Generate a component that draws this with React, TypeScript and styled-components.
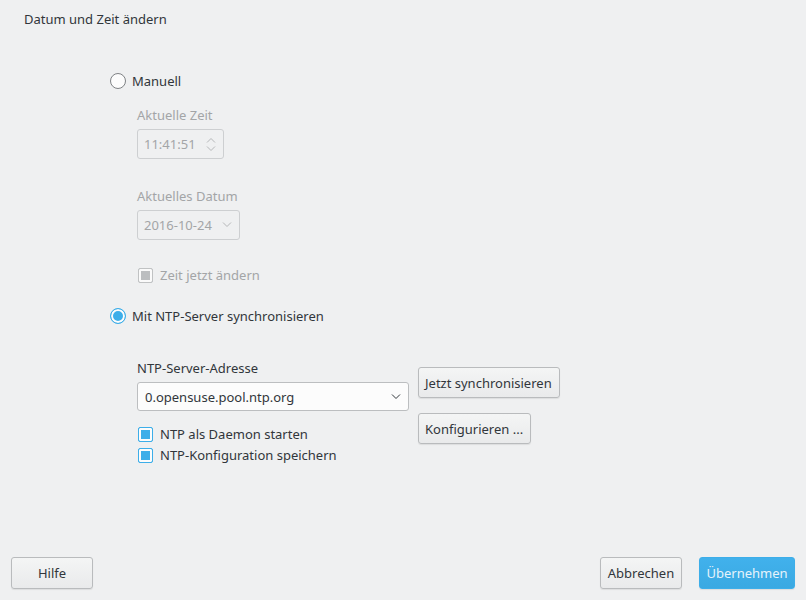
import styled, { createGlobalStyle } from "styled-components";

const GlobalStyle = createGlobalStyle`
  html, body {
    margin: 0;
    padding: 0;
    background: #eff0f1;
  }
  body {
    font-family: "Noto Sans", "Open Sans", sans-serif;
    font-size: 13px;
    color: #31363b;
  }
`;

const Chevron = ({ up = false, color = "#31363b" }: { up?: boolean; color?: string }) => (
  <svg width="10" height="6" viewBox="0 0 10 6">
    <polyline
      points={up ? "1,5.5 5,1.5 9,5.5" : "1,0.5 5,4.5 9,0.5"}
      fill="none"
      stroke={color}
      strokeWidth="1"
    />
  </svg>
);

const App = () => {
  return (
    <>
      <GlobalStyle />
      <Page>
        <Header>Datum und Zeit ändern</Header>
        <Main>
          <RadioRow style={{ marginTop: 34 }}>
            <Radio />
            <span>Manuell</span>
          </RadioRow>
          <Indent>
            <Label disabled style={{ marginTop: 16 }}>Aktuelle Zeit</Label>
            <InputBox width={87}>
              <span>11:41:51</span>
              <Spin>
                <Chevron up color="#b4b6b8" />
                <Chevron color="#b4b6b8" />
              </Spin>
            </InputBox>
            <Label disabled style={{ marginTop: 28 }}>Aktuelles Datum</Label>
            <InputBox width={103}>
              <span>2016-10-24</span>
              <Chevron color="#b4b6b8" />
            </InputBox>
            <CheckRow disabled style={{ marginTop: 26 }}>
              <CheckBox disabled />
              <span>Zeit jetzt ändern</span>
            </CheckRow>
          </Indent>
          <RadioRow style={{ marginTop: 23 }}>
            <Radio checked />
            <span>Mit NTP-Server synchronisieren</span>
          </RadioRow>
          <NtpBlock>
            <NtpLeft>
              <Label>NTP-Server-Adresse</Label>
              <Combo>
                <span>0.opensuse.pool.ntp.org</span>
                <Chevron />
              </Combo>
              <CheckRow style={{ marginTop: 14 }}>
                <CheckBox />
                <span>NTP als Daemon starten</span>
              </CheckRow>
              <CheckRow style={{ marginTop: 3 }}>
                <CheckBox />
                <span>NTP-Konfiguration speichern</span>
              </CheckRow>
            </NtpLeft>
            <NtpRight>
              <Button>Jetzt synchronisieren</Button>
              <Button>Konfigurieren ...</Button>
            </NtpRight>
          </NtpBlock>
        </Main>
        <Footer>
          <Button width={82}>Hilfe</Button>
          <FooterRight>
            <Button width={82}>Abbrechen</Button>
            <Button width={96} primary>Übernehmen</Button>
          </FooterRight>
        </Footer>
      </Page>
    </>
  );
};

export default App;

const Page = styled.div`
  height: 600px;
  display: flex;
  flex-direction: column;
  box-sizing: border-box;
`;

const Header = styled.div`
  height: 38px;
  padding: 10px 0 0 24px;
  line-height: 18px;
  box-sizing: border-box;
`;

const Main = styled.div`
  display: flex;
  flex-direction: column;
  padding-left: 110px;
`;

const RadioRow = styled.div`
  display: flex;
  align-items: center;
  height: 18px;
  line-height: 18px;
  gap: 6px;
`;

const Radio = styled.span<{ checked?: boolean }>`
  width: 16px;
  height: 16px;
  box-sizing: border-box;
  border-radius: 50%;
  border: 1px solid ${({ checked }) => (checked ? "#3daee9" : "#7f8285")};
  background: ${({ checked }) => (checked ? "#3daee9" : "#fcfcfc")};
  box-shadow: ${({ checked }) => (checked ? "inset 0 0 0 2px #fcfcfc" : "none")};
`;

const Indent = styled.div`
  display: flex;
  flex-direction: column;
  padding-left: 27px;
`;

const Label = styled.div<{ disabled?: boolean }>`
  height: 18px;
  line-height: 18px;
  color: ${({ disabled }) => (disabled ? "#a3a5a7" : "#31363b")};
`;

const InputBox = styled.div<{ width: number }>`
  width: ${({ width }) => width}px;
  height: 30px;
  margin-top: 5px;
  box-sizing: border-box;
  border: 1px solid #cdcfd1;
  border-radius: 3px;
  display: flex;
  align-items: center;
  justify-content: space-between;
  padding: 0 7px 0 6px;
  color: #a3a5a7;
`;

const Spin = styled.div`
  display: flex;
  flex-direction: column;
  gap: 3px;
`;

const CheckRow = styled.div<{ disabled?: boolean }>`
  display: flex;
  align-items: center;
  height: 18px;
  line-height: 18px;
  gap: 7px;
  padding-left: 1px;
  color: ${({ disabled }) => (disabled ? "#a3a5a7" : "#31363b")};
`;

const CheckBox = styled.span<{ disabled?: boolean }>`
  width: 15px;
  height: 15px;
  box-sizing: border-box;
  border-radius: 2px;
  border: 1px solid ${({ disabled }) => (disabled ? "#b8babc" : "#3daee9")};
  background: ${({ disabled }) => (disabled ? "#b4b6b8" : "#3daee9")};
  box-shadow: inset 0 0 0 2px #fcfcfc;
  opacity: ${({ disabled }) => (disabled ? 0.85 : 1)};
`;

const NtpBlock = styled.div`
  display: flex;
  padding-left: 27px;
  margin-top: 34px;
`;

const NtpLeft = styled.div`
  width: 272px;
  display: flex;
  flex-direction: column;
`;

const Combo = styled.div`
  height: 29px;
  margin-top: 5px;
  box-sizing: border-box;
  border: 1px solid #bcbec0;
  border-radius: 3px;
  background: #fcfcfc;
  display: flex;
  align-items: center;
  justify-content: space-between;
  padding: 0 7px 0 7px;
`;

const NtpRight = styled.div`
  display: flex;
  flex-direction: column;
  align-items: flex-start;
  gap: 15px;
  margin-left: 9px;
  padding-top: 8px;
`;

const Button = styled.button<{ width?: number; primary?: boolean }>`
  font-family: inherit;
  font-size: 13px;
  height: ${({ width }) => (width ? 32 : 31)}px;
  ${({ width }) => (width ? `width: ${width}px;` : "padding: 0 7px 0 6px;")}
  box-sizing: border-box;
  border-radius: 3px;
  border: 1px solid ${({ primary }) => (primary ? "#3daee9" : "#b9bbbd")};
  background: ${({ primary }) =>
    primary ? "linear-gradient(#41b1ec, #3aa9e2)" : "linear-gradient(#f4f5f5, #e9eaeb)"};
  color: ${({ primary }) => (primary ? "#e6f3fb" : "#31363b")};
  box-shadow: 0 1px 1px rgba(0, 0, 0, 0.08);
  cursor: pointer;
`;

const Footer = styled.div`
  margin-top: auto;
  display: flex;
  justify-content: space-between;
  padding: 0 11px 11px 11px;
`;

const FooterRight = styled.div`
  display: flex;
  gap: 17px;
`;
